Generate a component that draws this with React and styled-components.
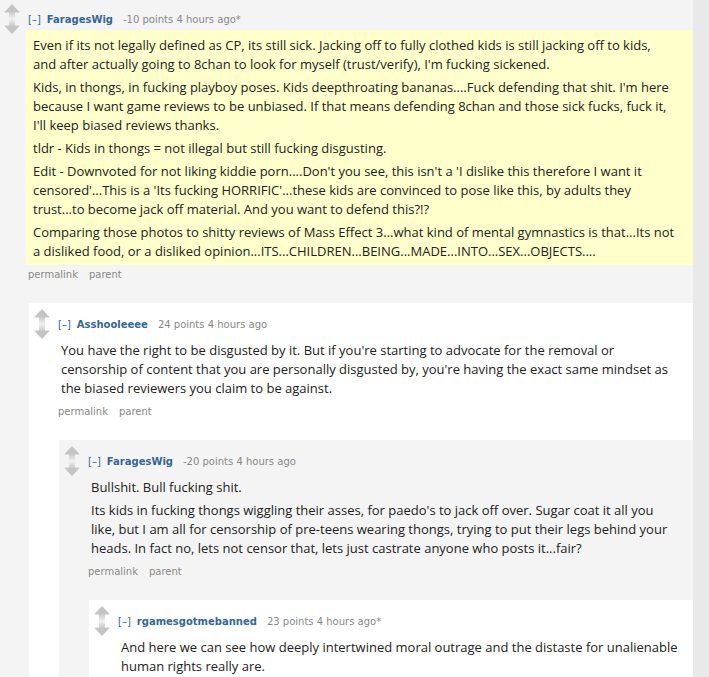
import React from "react";
import styled, { createGlobalStyle } from "styled-components";

const GlobalStyle = createGlobalStyle`
  html, body {
    margin: 0;
    padding: 0;
    height: 100%;
    overflow: hidden;
    background: #e9e9e9;
  }
  body {
    font-family: "Open Sans", "Noto Sans", sans-serif;
  }
`;

const thread = {
  author: "FaragesWig",
  score: "-10 points",
  time: "4 hours ago*",
  highlight: true,
  paragraphs: [
    [
      "Even if its not legally defined as CP, its still sick. Jacking off to fully clothed kids is still jacking off to kids,",
      "and after actually going to 8chan to look for myself (trust/verify), I'm fucking sickened.",
    ],
    [
      "Kids, in thongs, in fucking playboy poses. Kids deepthroating bananas....Fuck defending that shit. I'm here",
      "because I want game reviews to be unbiased. If that means defending 8chan and those sick fucks, fuck it,",
      "I'll keep biased reviews thanks.",
    ],
    ["tldr - Kids in thongs = not illegal but still fucking disgusting."],
    [
      "Edit - Downvoted for not liking kiddie porn....Don't you see, this isn't a 'I dislike this therefore I want it",
      "censored'...This is a 'Its fucking HORRIFIC'...these kids are convinced to pose like this, by adults they",
      "trust...to become jack off material. And you want to defend this?!?",
    ],
    [
      "Comparing those photos to shitty reviews of Mass Effect 3...what kind of mental gymnastics is that...Its not",
      "a disliked food, or a disliked opinion...ITS...CHILDREN...BEING...MADE...INTO...SEX...OBJECTS....",
    ],
  ],
  reply: {
    author: "Asshooleeee",
    score: "24 points",
    time: "4 hours ago",
    paragraphs: [
      [
        "You have the right to be disgusted by it. But if you're starting to advocate for the removal or",
        "censorship of content that you are personally disgusted by, you're having the exact same mindset as",
        "the biased reviewers you claim to be against.",
      ],
    ],
    reply: {
      author: "FaragesWig",
      score: "-20 points",
      time: "4 hours ago",
      paragraphs: [
        ["Bullshit. Bull fucking shit."],
        [
          "Its kids in fucking thongs wiggling their asses, for paedo's to jack off over. Sugar coat it all you",
          "like, but I am all for censorship of pre-teens wearing thongs, trying to put their legs behind your",
          "heads. In fact no, lets not censor that, lets just castrate anyone who posts it...fair?",
        ],
      ],
      reply: {
        author: "rgamesgotmebanned",
        score: "23 points",
        time: "4 hours ago*",
        paragraphs: [
          [
            "And here we can see how deeply intertwined moral outrage and the distaste for unalienable",
            "human rights really are.",
          ],
        ],
      },
    },
  },
};

const Main = styled.div`
  width: 693px;
  height: 677px;
  overflow: hidden;
  background: #f4f4f4;
`;

const Thread = styled.div`
  margin: -2px 0 0 -1px;
`;

const CommentBox = styled.div`
  display: flex;
  background: ${(p) => (p.$even ? "#ffffff" : "#f4f4f4")};
`;

const Midcol = styled.div`
  width: 29px;
  flex-shrink: 0;
  box-sizing: border-box;
  padding: 6px 0 0 5px;
`;

const Entry = styled.div`
  flex: 1;
  min-width: 0;
  padding: 14px 0 10px;
`;

const Tagline = styled.div`
  font-family: "DejaVu Sans", Verdana, sans-serif;
  font-size: 10px;
  line-height: 16px;
  color: #888;
  white-space: nowrap;
`;

const Expand = styled.span`
  color: #369;
  margin-right: 6px;
`;

const Author = styled.span`
  color: #369;
  font-weight: bold;
  margin-right: 10px;
`;

const Usertext = styled.div`
  margin: 2px 0 0 ${(p) => (p.$highlight ? "-2px" : "0")};
  padding: ${(p) => (p.$highlight ? "6px 7px 4px" : "6px 0 4px 3px")};
  background: ${(p) => (p.$highlight ? "#ffffcc" : "transparent")};
  font-size: 13px;
  line-height: 19px;
  color: #222;
`;

const Para = styled.p`
  margin: 0 0 4px;
  white-space: nowrap;
  &:last-child {
    margin-bottom: 0;
  }
`;

const FlatList = styled.div`
  display: flex;
  gap: 11px;
  margin-top: 3px;
  font-family: "DejaVu Sans", Verdana, sans-serif;
  font-size: 10px;
  line-height: 14px;
  color: #888;
`;

const Children = styled.div`
  margin: 21px 0 0 1px;
`;

function Arrows() {
  return (
    <svg width="16" height="30" viewBox="0 0 16 30">
      <defs>
        <linearGradient id="arrowFade" x1="0" y1="0" x2="0" y2="1">
          <stop offset="0.25" stopColor="#c4c4c4" />
          <stop offset="0.5" stopColor="#f2f2f2" />
          <stop offset="0.75" stopColor="#c4c4c4" />
        </linearGradient>
      </defs>
      <path
        d="M8 0 L16 8.5 L11 8.5 L11 21.5 L16 21.5 L8 30 L0 21.5 L5 21.5 L5 8.5 L0 8.5 Z"
        fill="url(#arrowFade)"
      />
    </svg>
  );
}

function Comment({ data, depth = 0 }) {
  return (
    <CommentBox $even={depth % 2 === 1}>
      <Midcol>
        <Arrows />
      </Midcol>
      <Entry>
        <Tagline>
          <Expand>[–]</Expand>
          <Author>{data.author}</Author>
          {data.score} {data.time}
        </Tagline>
        <Usertext $highlight={data.highlight}>
          {data.paragraphs.map((lines, i) => (
            <Para key={i}>
              {lines.map((line, j) => (
                <React.Fragment key={j}>
                  {j > 0 && <br />}
                  {line}
                </React.Fragment>
              ))}
            </Para>
          ))}
        </Usertext>
        <FlatList>
          <span>permalink</span>
          <span>parent</span>
        </FlatList>
        {data.reply && (
          <Children>
            <Comment data={data.reply} depth={depth + 1} />
          </Children>
        )}
      </Entry>
    </CommentBox>
  );
}

export default function App() {
  return (
    <>
      <GlobalStyle />
      <Main>
        <Thread>
          <Comment data={thread} />
        </Thread>
      </Main>
    </>
  );
}
